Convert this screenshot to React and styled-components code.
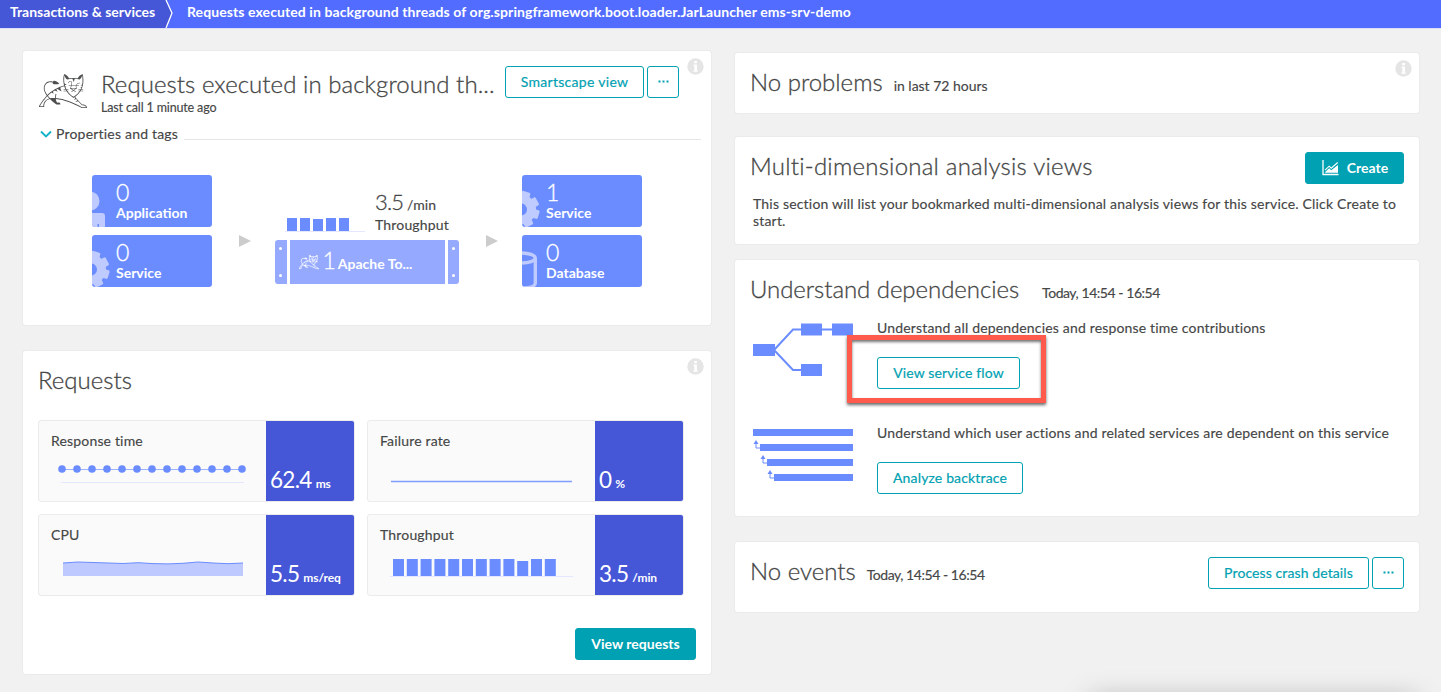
import React from "react";
import styled, { createGlobalStyle, css } from "styled-components";
import { SiApachetomcat } from "react-icons/si";

const Global = createGlobalStyle`
  *, *::before, *::after { box-sizing: border-box; }
  body {
    margin: 0;
    background: #f1f1f1;
    color: #454646;
    font: 14px/18px Lato, "Open Sans", sans-serif;
    letter-spacing: 0.17px;
    -webkit-text-stroke: 0.15px;
  }
  button { font-family: inherit; }
`;

const Page = styled.div`
  position: relative;
  height: 692px;
  overflow: hidden;
`;

const Breadcrumbs = styled.nav`
  display: flex;
  height: 28px;
  background: #526cff;
  box-shadow: 0 1px 0 #dcdff5;
  color: #fff;
  font-weight: 700;
  line-height: 24px;
  letter-spacing: 0.09px;
  -webkit-text-stroke: 0;
`;
const Crumb = styled.span`
  padding-left: ${(p) => p.$pad}px;
  width: ${(p) => p.$w}px;
  background: ${(p) => (p.$root ? "#4556d7" : "transparent")};
  ${(p) => p.$root && "letter-spacing: 0;"}
  white-space: nowrap;
`;
const CrumbArrow = styled.svg`
  display: block;
  width: 8px;
  height: 28px;
`;

const Columns = styled.main`
  display: flex;
  align-items: flex-start;
  gap: 24px;
  padding: 23px 22px 0 23px;
`;
const Column = styled.div`
  display: flex;
  flex-direction: column;
  width: ${(p) => p.$w}px;
  padding-top: ${(p) => p.$top || 0}px;
`;
const Card = styled.section`
  position: relative;
  height: ${(p) => p.$h}px;
  margin-bottom: ${(p) => p.$gap || 0}px;
  padding: ${(p) => p.$pad || "15px"};
  background: #fff;
  border-radius: 3px;
  box-shadow: 0 0 0 1px #ebebeb;
`;
const InfoBadge = styled.svg`
  position: absolute;
  top: 7px;
  right: 7px;
  width: 17px;
  height: 17px;
`;
const Title = styled.h2`
  margin: 0;
  font-size: 24px;
  font-weight: 300;
  line-height: ${(p) => p.$lh || 28}px;
  letter-spacing: ${(p) => p.$ls || 0}px;
  -webkit-text-stroke: 0.3px;
  white-space: nowrap;
`;
const Row = styled.div`
  display: flex;
  align-items: ${(p) => p.$align || "flex-start"};
  justify-content: ${(p) => p.$justify || "flex-start"};
  gap: ${(p) => p.$gap || 0}px;
`;
const Note = styled.span`
  letter-spacing: ${(p) => p.$ls ?? 0.17}px;
  line-height: ${(p) => p.$lh || 18}px;
  white-space: nowrap;
`;
const Button = styled.button`
  display: flex;
  align-items: center;
  justify-content: center;
  flex: none;
  width: ${(p) => p.$w}px;
  height: 32px;
  padding: 0 0 1px;
  border: 1px solid #00a1b2;
  border-radius: 3px;
  background: #fff;
  color: #00a1b2;
  font-size: 14px;
  letter-spacing: ${(p) => p.$ls || 0}px;
  -webkit-text-stroke: 0.2px;
  ${(p) => p.$primary && css`
    background: #00a1b2;
    color: #fff;
    font-weight: 700;
    -webkit-text-stroke: 0;
  `}
`;

/* Service header */
const ServiceHead = styled.header`
  display: flex;
  height: 59px;
`;
const Cat = styled(SiApachetomcat)`
  flex: none;
  width: ${(p) => p.$size}px;
  height: ${(p) => p.$size}px;
  stroke: currentColor;
  stroke-width: ${(p) => p.$stroke || 0};
`;
const CatSlot = styled.div`
  width: 62px;
  height: 50px;
  padding-top: 1px;
  color: #4d4f4f;
`;
const ServiceName = styled.div`
  width: 404px;
  padding-top: 3px;
`;
const LastCall = styled.div`
  font-size: 12.5px;
  line-height: 16px;
  margin-top: 1px;
  letter-spacing: -0.15px;
`;
const Properties = styled.div`
  display: flex;
  align-items: center;
  height: 18px;
  margin-right: -5px;
  gap: 4px;
  &::after {
    content: "";
    flex: 1;
    border-bottom: 1px solid #e6e6e6;
    margin: 10px 0 0 2px;
  }
`;
const Flow = styled.div`
  display: flex;
  padding: 32px 0 0 53px;
`;
const Stack = styled.div`
  display: flex;
  flex-direction: column;
  gap: 8px;
`;
const EntityTile = styled.div`
  position: relative;
  width: 120px;
  height: 52px;
  padding: 5px 0 0 24px;
  border-radius: 3px;
  overflow: hidden;
  background: #6a8cff;
  color: #fff;
  font-weight: 700;
  line-height: 18px;
  letter-spacing: 0;
  -webkit-text-stroke: 0;
`;
const EntityCount = styled.div`
  font-size: 23px;
  font-weight: 300;
  line-height: 24px;
  -webkit-text-stroke: 0.3px;
`;
const EntityIcon = styled.svg`
  position: absolute;
  left: 0;
  top: 0;
  width: 24px;
  height: 52px;
`;
const FlowArrow = styled.i`
  width: 0;
  height: 0;
  margin: 60px ${(p) => p.$r}px 0 ${(p) => p.$l}px;
  border: solid transparent;
  border-width: 6px 0 6px 12px;
  border-left-color: #ccc;
`;
const Center = styled.div`
  width: 184px;
  padding-top: 14px;
`;
const Metric = styled.div`
  display: flex;
  height: 51px;
  padding-left: 10px;
`;
const MiniBars = styled.svg`
  width: 80px;
  height: 43px;
  margin-right: 10px;
`;
const Value = styled.div`
  height: 27px;
  padding-top: 1px;
  white-space: nowrap;
  line-height: 24px;
  & > b { font-size: 22px; font-weight: 300; letter-spacing: -0.8px; -webkit-text-stroke: 0.3px; }
`;
const Server = styled.div`
  display: flex;
  gap: 3px;
  height: 44px;
`;
const Rail = styled.div`
  display: flex;
  flex-direction: column;
  justify-content: space-between;
  align-items: center;
  width: 11.5px;
  padding: 7px 0;
  background: #95a9ff;
  border-radius: ${(p) => (p.$right ? "0 3px 3px 0" : "3px 0 0 3px")};
  &::before, &::after {
    content: "";
    width: 3px;
    height: 3px;
    border-radius: 50%;
    background: #fff;
  }
`;
const ServerBody = styled.div`
  display: flex;
  align-items: center;
  flex: 1;
  padding-left: 9px;
  background: #95a9ff;
  color: #fff;
  font-weight: 700;
  letter-spacing: 0;
  -webkit-text-stroke: 0;
  white-space: nowrap;
`;
const ServerLabel = styled.span`
  line-height: 24px;
  & > b {
    margin: 0 2px 0 4px;
    font-size: 23px;
    font-weight: 300;
    -webkit-text-stroke: 0.3px;
  }
`;

/* Request metrics */
const MetricGrid = styled.div`
  display: grid;
  grid-template-columns: 317px 317px;
  gap: 12px;
  margin-top: 26px;
`;
const MetricTile = styled.div`
  display: flex;
  height: 82px;
  border: 1px solid #ebebeb;
  border-radius: 3px;
  overflow: hidden;
  background: #fafafa;
`;
const MetricChart = styled.div`
  flex: 1;
  padding: 11px 0 0 12px;
`;
const MetricValue = styled.div`
  width: 88px;
  padding: 45px 0 0 4px;
  background: #4556d7;
  color: #fff;
  font-weight: 700;
  font-size: 12px;
  letter-spacing: -0.1px;
  -webkit-text-stroke: 0;
  white-space: nowrap;
  line-height: 28px;
  & > b { margin-right: 4px; font-size: 22.5px; font-weight: 400; letter-spacing: -0.7px; }
`;
const Chart = styled.svg`
  display: block;
  width: 200px;
  height: 40px;
`;
const Footer = styled.div`
  display: flex;
  justify-content: flex-end;
  padding-top: 32px;
`;

/* Right column */
const AnalysisText = styled.p`
  margin: 11px 0 0 3px;
  line-height: 17px;
  letter-spacing: 0.19px;
`;
const DependencyList = styled.div`
  padding-top: 16px;
`;
const Dependency = styled.div`
  display: flex;
  gap: 24px;
  height: 105px;
  padding-left: 3px;
`;
const Diagram = styled.svg`
  flex: none;
  width: 100px;
  height: 64px;
`;
const DependencyBody = styled.div`
  display: flex;
  flex-direction: column;
  align-items: flex-start;
  gap: 20px;
`;
const Highlighted = styled.div`
  position: relative;
  &::after {
    content: "";
    position: absolute;
    left: -30px;
    top: -22px;
    width: 199px;
    height: 68px;
    border: 5px solid #ff5a4c;
    box-shadow: 0 2px 3px rgba(0, 0, 0, 0.6), inset 0 2px 3px rgba(0, 0, 0, 0.55);
  }
`;
const BottomShade = styled.div`
  position: absolute;
  left: 1090px;
  top: 701px;
  width: 326px;
  height: 20px;
  box-shadow: 0 0 28px rgba(0, 0, 0, 0.34);
`;
const ChartIcon = styled.svg`
  width: 17px;
  height: 16px;
  margin: 0 8px 0 1px;
`;

const Info = () => (
  <InfoBadge viewBox="0 0 17 17">
    <circle cx="8.5" cy="8.5" r="8.2" fill="#e5e5e5" />
    <path d="M7.200 3h2.700v2.200H7.200zM6.500 6.600h3.400v6h.8v1.200H6.300v-1.200h1v-4.800h-.8z" fill="#fff" />
  </InfoBadge>
);

const Dots = () => (
  <svg width="11" height="3" viewBox="0 0 11 3" fill="#00a1b2">
    <path d="M.5.5h2v2h-2zM4.500.5h2v2h-2zM8.500.5h2v2h-2z" />
  </svg>
);

const Gear = () => (
  <EntityIcon viewBox="0 0 24 52">
    <g transform="translate(-1 34.500)">
      <circle r="10.500" fill="none" stroke="#bfcbff" strokeWidth="9" />
      {[0, 45, 90, 135, 180, 225, 270, 315].map((a) => (
        <rect key={a} x="12" y="-4.500" width="6.500" height="9" rx="1.500" fill="#bfcbff" transform={`rotate(${a + 17})`} />
      ))}
    </g>
  </EntityIcon>
);
const Person = () => (
  <EntityIcon viewBox="0 0 24 52" fill="#bfcbff">
    <circle cx="-2" cy="26" r="9.5" />
    <path d="M0 38h10q3 0 3 3v11H7v-3H5.500v3H0z" />
  </EntityIcon>
);
const Database = () => (
  <EntityIcon viewBox="0 0 24 52" fill="none" stroke="#bfcbff" strokeWidth="3.4">
    <ellipse cx="-1" cy="23" rx="14.300" ry="5" />
    <path d="M13.300 23v25q0 5-14 5" />
  </EntityIcon>
);

const Entity = ({ count, label, icon }) => (
  <EntityTile>
    {icon}
    <EntityCount>{count}</EntityCount>
    {label}
  </EntityTile>
);

const RequestMetric = ({ label, value, unit, children }) => (
  <MetricTile>
    <MetricChart>
      {label}
      <Chart viewBox="0 0 200 40">{children}</Chart>
    </MetricChart>
    <MetricValue><b>{value}</b>{unit}</MetricValue>
  </MetricTile>
);

const points = Array.from({ length: 13 }, (_, i) => 11 + i * 15);

export default function App() {
  return (
    <Page>
      <Global />
      <Breadcrumbs>
        <Crumb $root $pad={10} $w={165}>Transactions &amp; services</Crumb>
        <CrumbArrow viewBox="0 0 8 28">
          <path d="M0 0h1l6 13-6 15H0z" fill="#4556d7" />
          <path d="M1 0l6 13-6 15" fill="none" stroke="#fff" strokeWidth="1.3" />
        </CrumbArrow>
        <Crumb $pad={14}>Requests executed in background threads of org.springframework.boot.loader.JarLauncher ems-srv-demo</Crumb>
      </Breadcrumbs>

      <Columns>
        <Column $w={688}>
          <Card $h={274} $gap={26} $pad="15px 15px 0 16px">
            <Info />
            <ServiceHead>
              <CatSlot><Cat $size={48} /></CatSlot>
              <ServiceName>
                <Title $lh={30} $ls={0.06}>Requests executed in background th...</Title>
                <LastCall>Last call 1 minute ago</LastCall>
              </ServiceName>
              <Row $gap={3}>
                <Button $w={139} $ls={0.3}>Smartscape view</Button>
                <Button $w={32}><Dots /></Button>
              </Row>
            </ServiceHead>
            <Properties>
              <svg width="13" height="10" viewBox="0 0 13 10">
                <path d="M2 2.500l5 5 5-5" fill="none" stroke="#14b4c8" strokeWidth="1.900" />
              </svg>
              <Note $ls={0.2}>Properties and tags</Note>
            </Properties>
            <Flow>
              <Stack>
                <Entity count="0" label="Application" icon={<Person />} />
                <Entity count="0" label="Service" icon={<Gear />} />
              </Stack>
              <FlowArrow $l={27} $r={24} />
              <Center>
                <Metric>
                  <MiniBars viewBox="0 0 80 43">
                    <path d="M0 42.500h80" stroke="#e4e8ff" />
                    <path d="M2 29h10v13H2zM15 29h10v13H15zM28 30h10v12H28zM41 29h10v13H41zM54 29h10v13H54z" fill="#6a8cff" />
                  </MiniBars>
                  <div>
                    <Value><b>3.5</b> /min</Value>
                    <Note $lh={16}>Throughput</Note>
                  </div>
                </Metric>
                <Server>
                  <Rail />
                  <ServerBody>
                    <Cat $size={20} $stroke={0.3} />
                    <ServerLabel><b>1</b>Apache To...</ServerLabel>
                  </ServerBody>
                  <Rail $right />
                </Server>
              </Center>
              <FlowArrow $l={27} $r={24} />
              <Stack>
                <Entity count="1" label="Service" icon={<Gear />} />
                <Entity count="0" label="Database" icon={<Database />} />
              </Stack>
            </Flow>
          </Card>

          <Card $h={323} $pad="15px 15px 0 15px">
            <Info />
            <Title>Requests</Title>
            <MetricGrid>
              <RequestMetric label="Response time" value="62.4" unit="ms">
                <path d="M11 19.500H191" stroke="#9db3ff" strokeWidth="1.200" />
                {points.map((x) => <circle key={x} cx={x} cy="19" r="3.800" fill="#6a8cff" />)}
                <path d="M10 32.500h183" stroke="#e4e8ff" />
              </RequestMetric>
              <RequestMetric label="Failure rate" value="0" unit="%">
                <path d="M11 31.500h181" stroke="#7f9dff" strokeWidth="1.400" />
              </RequestMetric>
              <RequestMetric label="CPU" value="5.5" unit="ms/req">
                <g transform="translate(1 0)">
                  <path d="M11 19l15-1 45 1.500 15-.8 15 .9 15 .3 15-.6 15-1.300 15 1 15 .7 15-.7v13H11z" fill="#bdc9ff" />
                  <path d="M11 19l15-1 45 1.500 15-.8 15 .9 15 .3 15-.6 15-1.300 15 1 15 .7 15-.7" fill="none" stroke="#6a8cff" />
                </g>
              </RequestMetric>
              <RequestMetric label="Throughput" value="3.5" unit="/min">
                <path d="M10 32.500h183" stroke="#e4e8ff" />
                {Array.from({ length: 12 }, (_, i) => (
                  <rect key={i} x={13 + i * 13.8} y={i === 9 ? 17 : 15} width="11" height={i === 9 ? 15 : 17} fill="#6a8cff" />
                ))}
              </RequestMetric>
            </MetricGrid>
            <Footer><Button $primary $w={121}>View requests</Button></Footer>
          </Card>
        </Column>

        <Column $w={684} $top={2}>
          <Card $h={60} $gap={24}>
            <Info />
            <Row $gap={11} $align="baseline">
              <Title>No problems</Title>
              <Note $ls={-0.02}>in last 72 hours</Note>
            </Row>
          </Card>
          <Card $h={107} $gap={16}>
            <Row $justify="space-between">
              <Title $ls={0.23}>Multi-dimensional analysis views</Title>
              <Button $primary $w={99}>
                <ChartIcon viewBox="0 0 17 16">
                  <path d="M1 0v14.500h15.500" fill="none" stroke="#fff" strokeWidth="1.300" />
                  <path d="M3.200 12.700V12l4-3.800 2 2L16 5v7.700z" fill="#fff" />
                  <path d="M3 10.200l4.200-4 2 2 6.500-5.700" fill="none" stroke="#fff" strokeWidth="1.100" />
                </ChartIcon>
                Create
              </Button>
            </Row>
            <AnalysisText>This section will list your bookmarked multi-dimensional analysis views for this service. Click Create to start.</AnalysisText>
          </Card>
          <Card $h={256} $gap={26}>
            <Row $gap={23} $align="baseline">
              <Title $ls={-0.06}>Understand dependencies</Title>
              <Note $ls={-0.45}>Today, 14:54 - 16:54</Note>
            </Row>
            <DependencyList>
              <Dependency>
                <Diagram viewBox="0 0 100 64" fill="#6a8cff">
                  <path d="M48 10.500H40L21 31l19 20h8M68 10.500h12" fill="none" stroke="#6a8cff" strokeWidth="2" />
                  <path d="M0 25h22v12H0zM48 4.500h21v12H48zM79 4.500h21v12H79zM48 45h21v12H48z" />
                </Diagram>
                <DependencyBody>
                  <Note>Understand all dependencies and response time contributions</Note>
                  <Highlighted><Button $w={143} $ls={0.15}>View service flow</Button></Highlighted>
                </DependencyBody>
              </Dependency>
              <Dependency>
                <Diagram viewBox="0 0 100 64" fill="#6a8cff">
                  <path d="M0 5h100v7H0zM7 20h93v7H7zM14 35h86v7H14zM21 50h79v7H21z" />
                  <path d="M3 18v6h4M10 33v6h4M17 48v6h4" fill="none" stroke="#6a8cff" />
                  <path d="M.5 20L3 16l2.500 4zM7.500 35l2.500-4 2.500 4zM14.500 50l2.500-4 2.500 4z" />
                </Diagram>
                <DependencyBody>
                  <Note>Understand which user actions and related services are dependent on this service</Note>
                  <Button $w={146} $ls={0.15}>Analyze backtrace</Button>
                </DependencyBody>
              </Dependency>
            </DependencyList>
          </Card>
          <Card $h={70}>
            <Row $justify="space-between">
              <Row $gap={11} $align="baseline">
                <Title>No events</Title>
                <Note $ls={-0.45}>Today, 14:54 - 16:54</Note>
              </Row>
              <Row $gap={3}>
                <Button $w={161} $ls={0.1}>Process crash details</Button>
                <Button $w={32}><Dots /></Button>
              </Row>
            </Row>
          </Card>
        </Column>
      </Columns>
      <BottomShade />
    </Page>
  );
}
